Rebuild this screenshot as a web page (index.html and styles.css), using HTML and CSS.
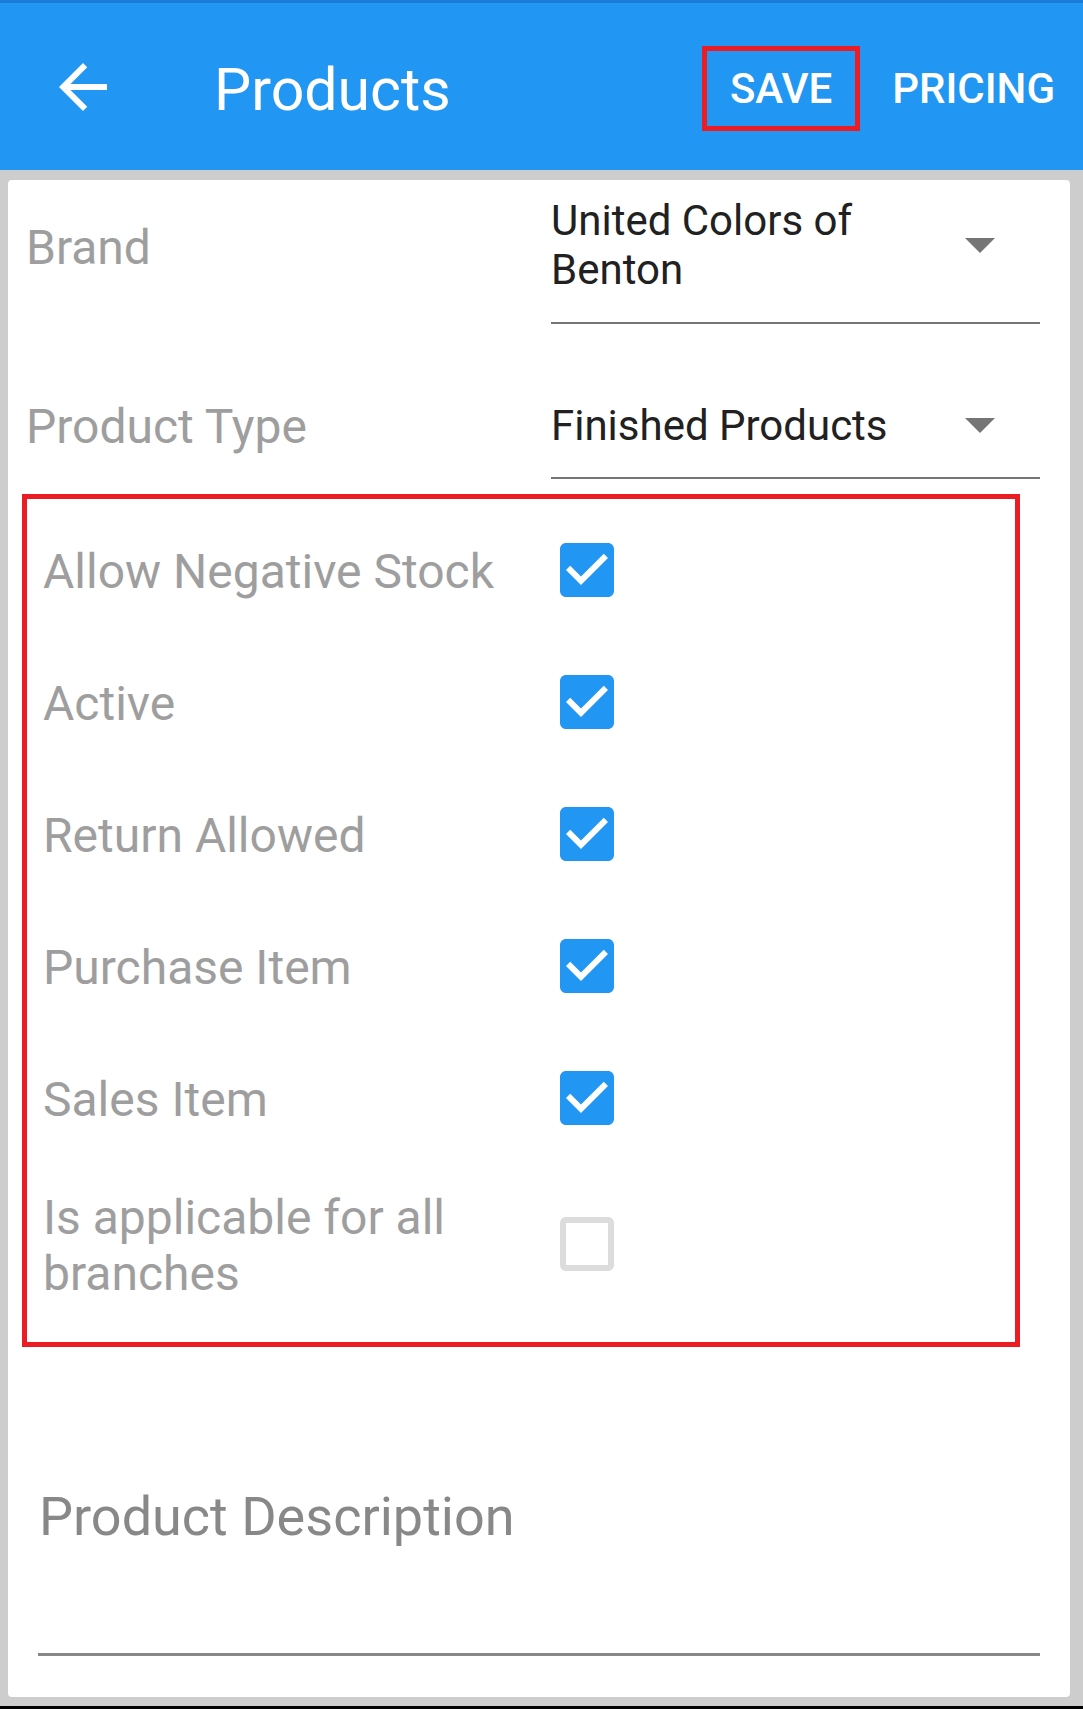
FILE: index.html
```html
<!DOCTYPE html>
<html lang="en">
<head>
<meta charset="utf-8">
<title>Products</title>
<link rel="stylesheet" href="styles.css">
</head>
<body>
<header class="appbar">
  <button class="back" aria-label="Back">
    <svg viewBox="0 0 24 24" width="72" height="72"><path fill="#ffffff" d="M20 11H7.83l5.59-5.59L12 4l-8 8 8 8 1.41-1.41L7.83 13H20v-2z"/></svg>
  </button>
  <h1 class="title">Products</h1>
  <nav class="actions">
    <span class="action action-save">SAVE</span>
    <span class="action">PRICING</span>
  </nav>
</header>
<main class="screen">
  <section class="card">
    <div class="field-row">
      <div class="field-label">Brand</div>
      <div class="select">
        <div class="select-main">
          <div class="select-text">United Colors of Benton</div>
          <svg class="caret" viewBox="0 0 10 5"><path fill="#757575" d="M0 0l5 5 5-5z"/></svg>
        </div>
      </div>
    </div>
    <div class="field-row">
      <div class="field-label">Product Type</div>
      <div class="select select-single">
        <div class="select-main">
          <div class="select-text">Finished Products</div>
          <svg class="caret" viewBox="0 0 10 5"><path fill="#757575" d="M0 0l5 5 5-5z"/></svg>
        </div>
      </div>
    </div>
    <div class="highlight">
      <div class="check-row">
        <div class="check-label">Allow Negative Stock</div>
        <svg class="checkbox" viewBox="0 0 24 24"><path fill="#2196f3" d="M19 3H5c-1.11 0-2 .9-2 2v14c0 1.1.89 2 2 2h14c1.11 0 2-.9 2-2V5c0-1.1-.89-2-2-2zm-9 14l-5-5 1.41-1.41L10 14.17l7.59-7.59L19 8l-9 9z"/></svg>
      </div>
      <div class="check-row">
        <div class="check-label">Active</div>
        <svg class="checkbox" viewBox="0 0 24 24"><path fill="#2196f3" d="M19 3H5c-1.11 0-2 .9-2 2v14c0 1.1.89 2 2 2h14c1.11 0 2-.9 2-2V5c0-1.1-.89-2-2-2zm-9 14l-5-5 1.41-1.41L10 14.17l7.59-7.59L19 8l-9 9z"/></svg>
      </div>
      <div class="check-row">
        <div class="check-label">Return Allowed</div>
        <svg class="checkbox" viewBox="0 0 24 24"><path fill="#2196f3" d="M19 3H5c-1.11 0-2 .9-2 2v14c0 1.1.89 2 2 2h14c1.11 0 2-.9 2-2V5c0-1.1-.89-2-2-2zm-9 14l-5-5 1.41-1.41L10 14.17l7.59-7.59L19 8l-9 9z"/></svg>
      </div>
      <div class="check-row">
        <div class="check-label">Purchase Item</div>
        <svg class="checkbox" viewBox="0 0 24 24"><path fill="#2196f3" d="M19 3H5c-1.11 0-2 .9-2 2v14c0 1.1.89 2 2 2h14c1.11 0 2-.9 2-2V5c0-1.1-.89-2-2-2zm-9 14l-5-5 1.41-1.41L10 14.17l7.59-7.59L19 8l-9 9z"/></svg>
      </div>
      <div class="check-row">
        <div class="check-label">Sales Item</div>
        <svg class="checkbox" viewBox="0 0 24 24"><path fill="#2196f3" d="M19 3H5c-1.11 0-2 .9-2 2v14c0 1.1.89 2 2 2h14c1.11 0 2-.9 2-2V5c0-1.1-.89-2-2-2zm-9 14l-5-5 1.41-1.41L10 14.17l7.59-7.59L19 8l-9 9z"/></svg>
      </div>
      <div class="check-row check-row-multi">
        <div class="check-label">Is applicable for all branches</div>
        <svg class="checkbox" viewBox="0 0 24 24"><path fill="#dcdcdc" d="M19 5v14H5V5h14m0-2H5c-1.1 0-2 .9-2 2v14c0 1.1.9 2 2 2h14c1.1 0 2-.9 2-2V5c0-1.1-.9-2-2-2z"/></svg>
      </div>
    </div>
    <div class="description">Product Description</div>
  </section>
</main>
<div class="navbar"></div>
</body>
</html>
```

FILE: styles.css
```css
* {
  box-sizing: border-box;
  margin: 0;
  padding: 0;
}

html,
body {
  width: 1083px;
  height: 1709px;
}

body {
  background: #cdcdcd;
  font-family: Roboto, "Noto Sans", sans-serif;
  overflow: hidden;
}

.appbar {
  height: 170px;
  border-top: 3px solid #1a7cd6;
  background: #2196f3;
  color: #ffffff;
  display: flex;
  align-items: center;
  padding: 0 28px 0 47px;
}

.back {
  width: 72px;
  height: 72px;
  flex: none;
  background: none;
  border: 0;
  display: block;
}

.back svg {
  display: block;
}

.title {
  font-size: 59px;
  font-weight: 400;
  line-height: 1;
  margin-left: 95px;
  margin-top: 6px;
}

.actions {
  margin-left: auto;
  margin-top: 4px;
  display: flex;
  align-items: center;
}

.action {
  font-size: 42px;
  font-weight: 500;
  line-height: 1;
}

.action-save {
  width: 158px;
  height: 85px;
  border: 5px solid #ec1c24;
  display: flex;
  align-items: center;
  justify-content: center;
}

.action + .action {
  margin-left: 32px;
}

.screen {
  padding: 10px 13px 9px 8px;
}

.card {
  background: #ffffff;
  border-radius: 4px;
  padding: 16px 30px 41px 18px;
}

.field-row {
  display: flex;
  align-items: center;
}

.field-row + .field-row {
  margin-top: 71px;
}

.field-label {
  width: 525px;
  flex: none;
  font-size: 48px;
  line-height: 55px;
  color: #9e9e9e;
  padding-top: 4px;
  padding-bottom: 30px;
}

.select {
  flex: 1;
  padding-bottom: 28px;
  border-bottom: 2px solid #757575;
}

.select-single {
  padding-bottom: 27px;
}

.select-main {
  display: flex;
  align-items: center;
  gap: 20px;
  padding-right: 45px;
}

.select-text {
  flex: 1;
  font-size: 42px;
  line-height: 49px;
  color: #212121;
}

.caret {
  width: 30px;
  height: 15px;
  flex: none;
}

.highlight {
  margin: 10px 0 0 -4px;
  width: 998px;
  border: 5px solid #ec1c24;
  padding: 5px 0 18px 16px;
}

.check-row {
  display: flex;
  align-items: center;
  min-height: 132px;
}

.check-row-multi {
  padding: 22px 0;
}

.check-label {
  width: 508px;
  flex: none;
  font-size: 48px;
  line-height: 56px;
  color: #9e9e9e;
  padding-top: 4px;
}

.checkbox {
  width: 72px;
  height: 72px;
  flex: none;
  display: block;
}

.description {
  margin: 140px 0 0 12px;
  padding: 0 0 107px 1px;
  border-bottom: 3px solid #888888;
  font-size: 54px;
  line-height: 59px;
  color: #888888;
}

.navbar {
  height: 3px;
  background: #000000;
}
```
